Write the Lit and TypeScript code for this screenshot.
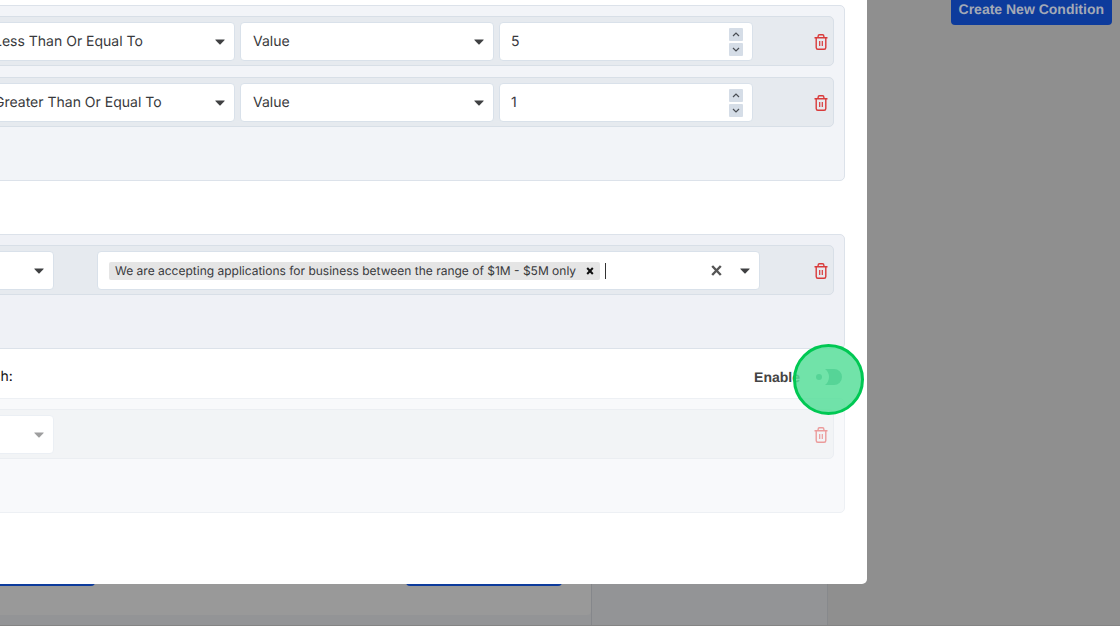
import { LitElement, html, css, svg } from "lit";
import { customElement, property } from "lit/decorators.js";

const base = css`
  * { box-sizing: border-box; }
  button, input, select { font: inherit; color: inherit; margin: 0; text-rendering: inherit; }
  button { border: 0; padding: 0; background: none; cursor: pointer; }
  svg { display: block; }
`;

const caret = svg`<svg class="caret" width="10" height="6" viewBox="0 0 10 6" aria-hidden="true"><path d="M0.6 0.4h8.8q.6 0 .2.5L5.6 5.2q-.6.5-1.2 0L.4.9Q0 .4.6.4z" fill="currentColor"/></svg>`;

@customElement("select-field")
class SelectField extends LitElement {
  @property() label = "";
  @property() value = "";
  static styles = [base, css`
    :host { display: block; flex: none; }
    .field { display: grid; align-items: center; height: 39px; border: 1px solid #d9e1ea; border-radius: 4px; background: #fff; }
    .field > * { grid-area: 1 / 1; }
    select { appearance: none; width: 100%; height: 100%; border: 0; border-radius: 4px; padding: 0 30px 0 12px; background: transparent; outline: 0; }
    .caret { justify-self: end; margin-right: 9px; pointer-events: none; color: #3f4042; }
  `];
  render() {
    return html`<div class="field">
      <select aria-label=${this.label}><option>${this.value}</option></select>${caret}
    </div>`;
  }
}

@customElement("number-field")
class NumberField extends LitElement {
  @property() value = "";
  static styles = [base, css`
    :host { display: block; flex: none; }
    .field { display: flex; align-items: center; height: 39px; border: 1px solid #d9e1ea; border-radius: 4px; background: #fff; padding: 0 9px 0 11px; }
    input { flex: 1; min-width: 0; border: 0; padding: 0; background: none; outline: 0; }
    .steps { display: grid; gap: 2px; }
    .steps button { display: grid; place-items: center; width: 14px; height: 13px; border-radius: 1px; background: #d5dde7; color: #4a4e55; }
  `];
  render() {
    return html`<div class="field">
      <input aria-label="Amount" inputmode="numeric" .value=${this.value}>
      <div class="steps">
        <button aria-label="Increase"><svg width="8" height="5" viewBox="0 0 8 5"><path d="M1 4l3-3 3 3" fill="none" stroke="currentColor" stroke-width="1.2"/></svg></button>
        <button aria-label="Decrease"><svg width="8" height="5" viewBox="0 0 8 5"><path d="M1 1l3 3 3-3" fill="none" stroke="currentColor" stroke-width="1.2"/></svg></button>
      </div>
    </div>`;
  }
}

@customElement("delete-button")
class DeleteButton extends LitElement {
  static styles = [base, css`
    :host { display: block; margin-left: auto; color: #d93a3a; }
    button { display: block; }
  `];
  render() {
    return html`<button aria-label="Delete"><svg width="14" height="16" viewBox="0 0 14 16" fill="none" stroke="currentColor" stroke-width="1.4">
      <path d="M.5 3.8h13M2.2 4v9.4q0 1.8 1.7 1.8h6.2q1.7 0 1.7-1.8V4M4.1 3.6V2.4q0-1.6 1.4-1.6h3q1.4 0 1.4 1.6v1.2"/><path d="M5.7 7v5M8.3 7v5" stroke-width="1.2"/>
    </svg></button>`;
  }
}

@customElement("app-root")
class AppRoot extends LitElement {
  static styles = [base, css`
    :host { display: block; position: relative; height: 100vh; overflow: hidden; background: #8f8f8f; font: 14px/20px Inter, sans-serif; text-rendering: geometricPrecision; color: #38393c; }
    .page { display: flex; height: 100%; border-bottom: 1px solid #848484; }
    .canvas { flex: none; width: 592px; display: flex; flex-direction: column; justify-content: flex-end; background: #939496; border-right: 1px solid #85878b; }
    .card { display: flex; justify-content: space-between; height: 100%; margin-bottom: 10px; padding: 0 29px 29px 0; align-items: flex-end; background: #999; border-radius: 0 0 4px 0; }
    .stub { height: 36px; border-radius: 4px; background: #0d3b9c; }
    .first { width: 95px; border-radius: 0 4px 4px 0; }
    .second { width: 156px; }
    .side { flex: none; width: 236px; background: #939496; border-right: 1px solid #87898c; }
    .actions { flex: 1; display: flex; justify-content: flex-end; align-items: flex-start; padding-right: 8px; }
    .create { height: 25px; padding: 0 8px 7px; border-radius: 0 0 4px 4px; background: #0d3b9c; color: #a3a9b6; font-family: "Liberation Sans", Arial, sans-serif; font-weight: 700; line-height: 18px; white-space: nowrap; }
    .modal { position: absolute; top: 0; left: -40px; right: 253px; height: 584px; padding: 5px 22px 0 0; background: #fff; border-radius: 0 0 5px 0; }
    .panel { display: grid; gap: 11px; padding: 10px 10px 53px; border: 1px solid #dce2ea; border-radius: 5px; background: #f2f4f8; }
    .row { display: flex; align-items: center; gap: 5px; padding: 5px 5px 4px 9px; border: 1px solid #d8dfe7; border-radius: 5px; background: #e6eaef; }
    .roomy { gap: 43px; }
    .outcome { margin-top: 53px; background: #eff1f6; }
    .operand { width: 254px; }
    .target { width: 73px; }
    .head { display: flex; align-items: center; justify-content: space-between; height: 49px; padding: 6px 45px 0 8px; color: #111; }
    .head label { font-family: "Liberation Sans", Arial, sans-serif; font-weight: 700; color: #444; }
    .disabled { opacity: .5; }
    .tags { flex: none; width: 663px; height: 39px; display: flex; align-items: center; padding: 0 9px 0 11px; border: 1px solid #d9e1ea; border-radius: 4px; background: #fff; }
    .tag { display: flex; align-items: center; gap: 10px; height: 18px; padding: 0 6px; border-radius: 2px; background: #e5e5e5; font-size: 12px; white-space: nowrap; }
    .tags input { flex: 1; min-width: 0; margin-left: 5px; height: 16px; border: 0; border-left: 1px solid #333; padding: 0; outline: 0; background: none; }
    .clear { margin-right: 18px; color: #555; }
    .caret { color: #3f4042; }
    .spot { position: absolute; top: 344px; right: 256px; width: 71px; height: 71px; padding-bottom: 6px; border: 3px solid #00c853; border-radius: 50%; background: rgba(86, 222, 152, .84); display: grid; place-items: center; }
  `];

  render() {
    return html`
      <div class="page">
        <div class="canvas"><div class="card"><div class="stub first"></div><div class="stub second"></div></div></div>
        <div class="side"></div>
        <div class="actions"><button class="create">Create New Condition</button></div>
      </div>
      <section class="modal" role="dialog" aria-label="Condition">
        <div class="panel">
          ${[["Less Than Or Equal To", "5"], ["Greater Than Or Equal To", "1"]].map(([op, n]) => html`
            <div class="row">
              <select-field class="operand" label="Operator" value=${op}></select-field>
              <select-field class="operand" label="Type" value="Value"></select-field>
              <number-field class="operand" value=${n}></number-field>
              <delete-button></delete-button>
            </div>`)}
        </div>
        <div class="panel outcome">
          <div class="row roomy">
            <select-field class="target" label="Action"></select-field>
            <div class="tags">
              <span class="tag">We are accepting applications for business between the range of $1M - $5M only
                <button aria-label="Remove"><svg width="8" height="8" viewBox="0 0 8 8"><path d="M1.2 1l5.6 6M6.8 1L1.2 7" stroke="#111" stroke-width="2"/></svg></button>
              </span>
              <input aria-label="Messages">
              <button class="clear" aria-label="Clear"><svg width="11" height="11" viewBox="0 0 11 11"><path d="M1.2 1l8.6 9M9.8 1L1.2 10" stroke="currentColor" stroke-width="2.4"/></svg></button>
              ${caret}
            </div>
            <delete-button></delete-button>
          </div>
        </div>
        <div class="head"><span>match:</span><label for="enable">Enable</label></div>
        <div class="panel disabled">
          <div class="row">
            <select-field class="target" label="Fallback action"></select-field>
            <delete-button></delete-button>
          </div>
        </div>
      </section>
      <div class="spot">
        <button id="enable" role="switch" aria-checked="false">
          <svg width="28" height="16" viewBox="0 0 28 16"><circle cx="4" cy="8" r="3" fill="#56d497"/><path d="M10 0h9a8 8 0 0 1 0 16h-9a10 10 0 0 0 0-16z" fill="#56d497"/></svg>
        </button>
      </div>`;
  }
}
